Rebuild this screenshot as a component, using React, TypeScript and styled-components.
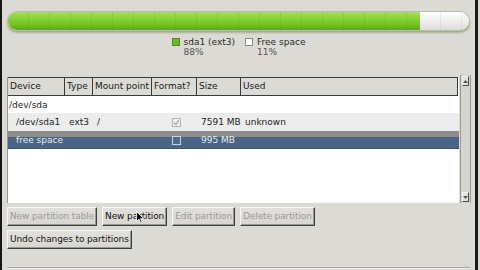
import React from "react";
import styled, { createGlobalStyle } from "styled-components";

const Global = createGlobalStyle`
  html, body { margin: 0; padding: 0; background: #dcdad5; }
  body { font-family: "DejaVu Sans", "Liberation Sans", sans-serif; font-size: 9px; color: #1c1c1c; }
  * { box-sizing: border-box; }
`;

const Page = styled.div`
  position: relative;
  width: 480px;
  height: 270px;
  overflow: hidden;
  background: #dcdad5;
  display: flex;
`;

const Window = styled.div`
  width: 478px;
  height: 270px;
  border-left: 2px solid #161616;
  border-right: 3px solid #1a1a1a;
  padding: 11px 3px 0 5px;
  display: flex;
  flex-direction: column;
`;

const UsageBar = styled.div`
  position: relative;
  width: 463px;
  height: 20px;
  border-radius: 10px;
  display: flex;
  overflow: hidden;
  box-shadow: 0 1px 0 #9fb27f, 0 2px 2px rgba(70, 110, 30, 0.35);
  border: 1px solid #b8bbb0;
`;

const Segment = styled.div<{ $kind: "used" | "free" }>`
  height: 100%;
  background: ${(p) =>
    p.$kind === "used"
      ? "repeating-linear-gradient(90deg, rgba(0,0,0,0) 0 20px, rgba(60,110,20,0.12) 20px 21px), linear-gradient(180deg, #a8de5a 0%, #8ad238 35%, #78c42a 65%, #5fa61c 100%)"
      : "repeating-linear-gradient(90deg, rgba(0,0,0,0) 0 20px, rgba(0,0,0,0.05) 20px 21px), linear-gradient(180deg, #ffffff 0%, #f0f0ee 45%, #dedcd8 100%)"};
`;

const Legend = styled.div`
  display: flex;
  justify-content: center;
  gap: 10px;
  margin-top: 6px;
  padding-right: 2px;
`;

const LegendItem = styled.div`
  display: grid;
  grid-template-columns: 8px auto;
  column-gap: 4px;
  row-gap: 0;
  line-height: 10px;
  color: #2a2a2a;
`;

const Swatch = styled.span<{ $color: string }>`
  width: 8px;
  height: 8px;
  margin-top: 1px;
  background: ${(p) => p.$color};
  border: 1px solid ${(p) => (p.$color === "#ffffff" ? "#8c8c8c" : "#4f8a1a")};
`;

const Percent = styled.span`
  grid-column: 2;
  color: #555;
`;

const TableArea = styled.div`
  display: flex;
  margin-top: 18px;
  height: 128px;
  align-items: stretch;
`;

const Tree = styled.div`
  width: 452px;
  margin-top: 2px;
  background: #ffffff;
  border-left: 1px solid #9a9893;
  display: flex;
  flex-direction: column;
`;

const cols = "57px 28px 59px 45px 44px 1fr";

const Header = styled.div`
  display: grid;
  grid-template-columns: ${cols};
  height: 19px;
  background: #dcdad5;
  border: 1px solid #3a3a3a;
  border-left: none;
  margin-right: 1px;
`;

const HeadCell = styled.div`
  border-right: 1px solid #3a3a3a;
  padding-left: 2px;
  line-height: 17px;
  color: #1a1a1a;
  white-space: nowrap;
  overflow: hidden;
  &:last-child { border-right: none; }
`;

const Row = styled.div<{ $tone: "white" | "alt" | "sel" }>`
  display: grid;
  grid-template-columns: ${cols};
  height: ${(p) => (p.$tone === "white" ? 17 : 18)}px;
  align-items: center;
  color: ${(p) => (p.$tone === "sel" ? "#e3e9f0" : "#1c1c1c")};
  background: ${(p) =>
    p.$tone === "sel"
      ? "linear-gradient(180deg, #8d8d8d 0 6px, #4b6586 6px 17px, #3c5270 17px)"
      : p.$tone === "alt"
      ? "#ececec"
      : "#ffffff"};
`;

const Cell = styled.div<{ $indent?: number; $center?: boolean }>`
  padding-left: ${(p) => p.$indent ?? 4}px;
  white-space: nowrap;
  display: flex;
  justify-content: ${(p) => (p.$center ? "center" : "flex-start")};
  ${(p) => (p.$center ? "padding-left: 3px;" : "")}
`;

const Check = styled.span<{ $sel?: boolean }>`
  width: 9px;
  height: 9px;
  display: inline-flex;
  align-items: center;
  justify-content: center;
  border: 1px solid ${(p) => (p.$sel ? "#c9d2de" : "#b6b6b2")};
  background: ${(p) => (p.$sel ? "#52698a" : "#efefed")};
`;

const Scrollbar = styled.div`
  width: 11px;
  margin-left: 1px;
  border-left: 1px solid #9c9a95;
  border-right: 1px solid #9c9a95;
  background: #d6d4cf;
  display: flex;
  flex-direction: column;
  justify-content: space-between;
  padding: 1px 0;
`;

const Stepper = styled.div`
  height: 10px;
  margin: 0 1px;
  background: #e4e2de;
  border: 1px solid #4a4a4a;
  border-top-color: #f2f2f0;
  border-left-color: #f2f2f0;
  display: flex;
  align-items: center;
  justify-content: center;
`;

const ButtonRow = styled.div`
  display: flex;
  gap: 5px;
  margin-top: 4px;
`;

const Button = styled.button<{ $disabled?: boolean }>`
  font-family: "DejaVu Sans", "Liberation Sans", sans-serif;
  font-size: 9px;
  letter-spacing: -0.12px;
  height: 19px;
  padding: 0 2px;
  margin: 0;
  background: linear-gradient(180deg, #e2e0dc, #d8d6d1);
  color: ${(p) => (p.$disabled ? "#9c9a96" : "#141414")};
  border: 1px solid;
  border-color: #f6f6f4 #3e3e3e #3e3e3e #f6f6f4;
  box-shadow: inset -1px -1px 0 #9a9892;
  white-space: nowrap;
  line-height: 17px;
`;

const BottomLine = styled.div`
  margin-top: auto;
  margin-bottom: 2px;
  width: 463px;
  height: 1px;
  background: #a9a7a2;
  box-shadow: 0 1px 0 #f0efec;
`;

const Cursor = styled.svg`
  position: absolute;
  left: 136px;
  top: 211px;
`;

export default function App() {
  return (
    <Page>
      <Global />
      <Window>
        <UsageBar>
          <Segment $kind="used" style={{ width: `${(414 / 463) * 100}%` }} />
          <Segment $kind="free" style={{ flex: 1 }} />
        </UsageBar>
        <Legend>
          <LegendItem>
            <Swatch $color="#6cbb26" />
            <span>sda1 (ext3)</span>
            <Percent>88%</Percent>
          </LegendItem>
          <LegendItem>
            <Swatch $color="#ffffff" />
            <span>Free space</span>
            <Percent>11%</Percent>
          </LegendItem>
        </Legend>
        <TableArea>
          <Tree>
            <Header>
              <HeadCell>Device</HeadCell>
              <HeadCell>Type</HeadCell>
              <HeadCell>Mount point</HeadCell>
              <HeadCell>Format?</HeadCell>
              <HeadCell>Size</HeadCell>
              <HeadCell>Used</HeadCell>
            </Header>
            <Row $tone="white">
              <Cell $indent={1}>/dev/sda</Cell>
            </Row>
            <Row $tone="alt">
              <Cell $indent={8}>/dev/sda1</Cell>
              <Cell>ext3</Cell>
              <Cell>/</Cell>
              <Cell $center>
                <Check>
                  <svg width="7" height="7" viewBox="0 0 7 7">
                    <path d="M1 3.5 L3 5.5 L6 1" fill="none" stroke="#a4a4a0" strokeWidth="1.2" />
                  </svg>
                </Check>
              </Cell>
              <Cell>7591 MB</Cell>
              <Cell>unknown</Cell>
            </Row>
            <Row $tone="sel">
              <Cell $indent={8}>free space</Cell>
              <Cell />
              <Cell />
              <Cell $center>
                <Check $sel />
              </Cell>
              <Cell>995 MB</Cell>
              <Cell />
            </Row>
          </Tree>
          <Scrollbar>
            <Stepper>
              <svg width="5" height="3" viewBox="0 0 5 3">
                <path d="M0 3 L2.5 0 L5 3 Z" fill="#555" />
              </svg>
            </Stepper>
            <Stepper>
              <svg width="5" height="3" viewBox="0 0 5 3">
                <path d="M0 0 L2.5 3 L5 0 Z" fill="#555" />
              </svg>
            </Stepper>
          </Scrollbar>
        </TableArea>
        <ButtonRow>
          <Button $disabled>New partition table</Button>
          <Button>New partition</Button>
          <Button $disabled>Edit partition</Button>
          <Button $disabled>Delete partition</Button>
        </ButtonRow>
        <ButtonRow>
          <Button>Undo changes to partitions</Button>
        </ButtonRow>
        <BottomLine />
      </Window>
      <Cursor width="9" height="13" viewBox="0 0 9 13">
        <path d="M0.5 0.5 L0.5 10.5 L3 8.2 L4.8 12.2 L6.2 11.6 L4.5 7.7 L7.8 7.7 Z" fill="#111" stroke="#fff" strokeWidth="0.8" />
      </Cursor>
    </Page>
  );
}
